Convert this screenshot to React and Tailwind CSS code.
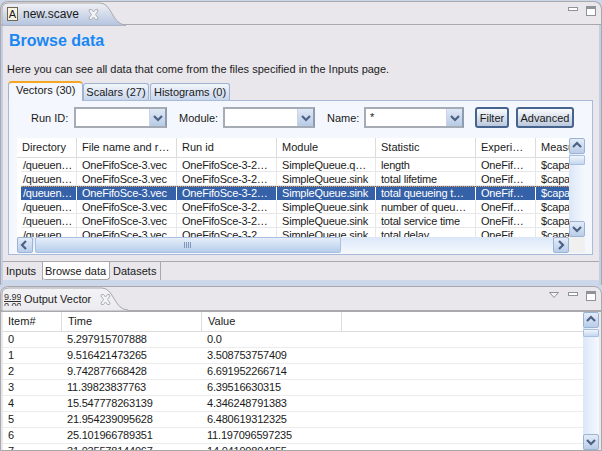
import React from 'react';

const vectorCols = [
  { name: 'Directory', w: 'w-[60px]' },
  { name: 'File name and r…', w: 'w-[100px]' },
  { name: 'Run id', w: 'w-[100px]' },
  { name: 'Module', w: 'w-[99px]' },
  { name: 'Statistic', w: 'w-[100px]' },
  { name: 'Experi…', w: 'w-[60px]' },
  { name: 'Measure', w: 'w-[33px]' },
];

const vectorRows = [
  ['SimpleQueue.q…', 'length'],
  ['SimpleQueue.sink', 'total lifetime'],
  ['SimpleQueue.sink', 'total queueing t…'],
  ['SimpleQueue.sink', 'number of queu…'],
  ['SimpleQueue.sink', 'total service time'],
  ['SimpleQueue.sink', 'total delay'],
];

const outputRows = [
  ['0', '5.297915707888', '0.0'],
  ['1', '9.516421473265', '3.508753757409'],
  ['2', '9.742877668428', '6.691952266714'],
  ['3', '11.39823837763', '6.39516630315'],
  ['4', '15.547778263139', '4.346248791383'],
  ['5', '21.954239095628', '6.480619312325'],
  ['6', '25.101966789351', '11.197096597235'],
  ['7', '31.035578144067', '14.04190804255'],
];

function Chevron({ dir }) {
  const paths = {
    up: 'M2 7 L6 3 L10 7',
    down: 'M2 4 L6 8 L10 4',
    left: 'M7 2 L3 6 L7 10',
    right: 'M4 2 L8 6 L4 10',
  };
  return (
    <svg width="12" height="12" viewBox="0 0 12 12" fill="none">
      <path d={paths[dir]} stroke="#4d6185" strokeWidth="2.2" />
    </svg>
  );
}

function ScrollBtn({ dir, className = '' }) {
  return (
    <div className={`flex items-center justify-center rounded-[2px] border border-[#9db3d3] bg-gradient-to-b from-[#e3ecf9] to-[#b9cde9] shrink-0 ${className}`}>
      <Chevron dir={dir} />
    </div>
  );
}

function Combo({ w, value }) {
  return (
    <div className={`${w} h-[21px] shrink-0 flex border-2 border-[#a5acb5] border-r-[#8f9bb0] bg-white`}>
      <div className="flex-1 pl-[4px] leading-[16px]">{value}</div>
      <div className="w-[16px] flex items-center justify-center bg-gradient-to-b from-[#dfe8f6] to-[#b7cbe6] border-l border-[#c9d4e6]">
        <Chevron dir="down" />
      </div>
    </div>
  );
}

function PushButton({ w, children }) {
  return (
    <div className={`${w} h-[21px] shrink-0 flex items-center justify-center pt-[1px] rounded-[3px] border-2 border-[#47648f] bg-gradient-to-b from-[#f9fafc] to-[#bcc9dd]`}>
      {children}
    </div>
  );
}

function TabShape({ width, from, to }) {
  const w = width;
  return (
    <svg className="absolute left-0 top-0" width={w} height="24" viewBox={`0 0 ${w} 24`}>
      <defs>
        <linearGradient id={`tabfill${w}`} x1="0" y1="0" x2="0" y2="1">
          <stop offset="0" stopColor={from} />
          <stop offset="1" stopColor={to} />
        </linearGradient>
      </defs>
      <path
        d={`M1 24 L1 7 Q1 1 8 1 L${w - 26} 1 C${w - 14} 1 ${w - 14} 23 ${w} 23 L${w} 24 Z`}
        fill={`url(#tabfill${w})`}
        stroke="#a9a9ac"
      />
    </svg>
  );
}

function CloseIcon() {
  return (
    <svg width="11" height="11" viewBox="0 0 11 11">
      <path
        d="M1.5 0.5 L3.5 0.5 L5.5 3 L7.5 0.5 L9.5 0.5 L10 2 L7.5 5.5 L10 9 L9.5 10.5 L7.5 10.5 L5.5 8 L3.5 10.5 L1.5 10.5 L1 9 L3.5 5.5 L1 2 Z"
        fill="#f4f4f6"
        stroke="#a9adb5"
      />
    </svg>
  );
}

function WindowIcons({ menu }) {
  return (
    <div className="flex items-start gap-[8px] pt-[4px] pr-[5px]">
      {menu && (
        <svg width="10" height="6" viewBox="0 0 10 6" className="mt-[1px] mr-[1px]">
          <path d="M0.5 0.5 L9.5 0.5 L5 5.5 Z" fill="#f4f4f6" stroke="#8f9299" />
        </svg>
      )}
      <div className="w-[10px] h-[4px] border border-[#8f9299] bg-white mt-[1px]"></div>
      <div className="w-[10px] h-[10px] border border-[#8f9299] border-t-[3px] bg-white"></div>
    </div>
  );
}

export default function App() {
  return (
    <div className="w-[602px] h-[451px] overflow-hidden bg-[#cdd7ea] flex flex-col text-[11px] leading-[14px] text-[#1a1a1a] font-['Liberation_Sans',Arial,sans-serif]">
      {/* EDITOR PANE */}
      <div className="h-[284px] mt-[1px] shrink-0 flex flex-col rounded-t-[8px] border-x border-t border-[#a9a9ac] bg-[#e9e7ec]">
        <div className="relative h-[23px] shrink-0 flex justify-end border-b border-[#a9a9ac]">
          <TabShape width={125} from="#f1f1f5" to="#b3c3df" />
          <div className="absolute left-[6px] top-[5px] flex items-center">
            <span className="w-[11px] h-[14px] border border-[#6d6650] bg-[#f7f3e3] text-[11px] leading-[12px] text-center">A</span>
            <span className="ml-[5px] text-[12px] leading-[14px]">new.scave</span>
            <span className="ml-[9px]"><CloseIcon /></span>
          </div>
          <WindowIcons />
        </div>

        <div className="flex-1 flex flex-col border-x-[2px] border-[#c3cfe5] min-h-0">
          <div className="pl-[6px] pt-[6px] text-[16px] leading-[20px] font-bold text-[#1a87f5]">Browse data</div>
          <div className="pl-[4px] pt-[11px]">Here you can see all data that come from the files specified in the Inputs page.</div>

          {/* TAB FOLDER */}
          <div className="flex items-end pl-[5px] mt-[4px] h-[20px] shrink-0">
            <div className="w-[75px] h-[20px] rounded-t-[4px] border-t-2 border-x border-t-[#f5a623] border-x-[#9fb3d1] bg-[#f4f7fd] pl-[7px] leading-[15px] z-10 -mb-[1px]">Vectors (30)</div>
            <div className="w-[66px] h-[17px] rounded-t-[3px] border border-b-0 border-[#9fb3d1] bg-gradient-to-b from-[#f2f6fc] to-[#c8d6ec] text-center leading-[17px]">Scalars (27)</div>
            <div className="w-[80px] h-[17px] ml-[1px] rounded-t-[3px] border border-b-0 border-[#9fb3d1] bg-gradient-to-b from-[#f2f6fc] to-[#c8d6ec] text-center leading-[17px]">Histograms (0)</div>
          </div>

          <div className="ml-[5px] w-[585px] h-[155px] shrink-0 flex flex-col border border-[#a8bbd8] bg-[#f4f7fd]">
            <div className="h-[37px] shrink-0 flex items-start pt-[6px]">
              <span className="ml-[22px] w-[43px] leading-[22px]">Run ID:</span>
              <Combo w="w-[93px]" />
              <span className="ml-[12px] w-[44px] leading-[22px]">Module:</span>
              <Combo w="w-[92px]" />
              <span className="ml-[12px] w-[37px] leading-[22px]">Name:</span>
              <Combo w="w-[100px]" value="*" />
              <div className="ml-[11px]"><PushButton w="w-[34px]">Filter</PushButton></div>
              <div className="ml-[7px]"><PushButton w="w-[58px]">Advanced</PushButton></div>
            </div>

            <div className="flex ml-[8px] w-[568px] h-[115px]">
              <div className="w-[552px] flex flex-col">
                <div className="h-[99px] overflow-hidden bg-white">
                  <div className="flex h-[20px] border-b border-[#dcdcdc] bg-white">
                    {vectorCols.map((c) => (
                      <div key={c.name} className={`${c.w} shrink-0 overflow-hidden whitespace-nowrap pl-[5px] leading-[19px] border-r border-[#dcdcdc] last:border-r-0`}>{c.name}</div>
                    ))}
                  </div>
                  {vectorRows.map((r, i) => {
                    const cells = ['/queuen…', 'OneFifoSce-3.vec', 'OneFifoSce-3-2…', r[0], r[1], 'OneFif…', '$capa'];
                    const selected = i === 2;
                    return (
                      <div key={i} className="h-[14px] pl-[4px]">
                        <div className={`flex h-[14px] ${selected ? 'bg-[#3561a8] text-white border-t border-dotted border-[#e8a04a]' : 'border-b border-[#e8e8e8]'}`}>
                          {cells.map((t, j) => (
                            <div
                              key={j}
                              className={`${j === 0 ? 'w-[56px] pl-[2px]' : `${vectorCols[j].w} pl-[5px]`} shrink-0 overflow-hidden whitespace-nowrap tracking-[-0.2px] ${selected ? 'leading-[13px] border-r border-white last:border-r-0' : 'leading-[15px] border-r border-[#e8e8e8] last:border-r-0'}`}
                            >
                              {t}
                            </div>
                          ))}
                        </div>
                      </div>
                    );
                  })}
                </div>
                <div className="h-[16px] flex bg-gradient-to-b from-[#dbe7f8] to-[#f5f9fe]">
                  <ScrollBtn dir="left" className="w-[16px]" />
                  <div className="w-[306px] ml-[2px] flex items-center justify-center rounded-[2px] border border-[#a9c0e0] bg-gradient-to-b from-[#e6eefa] to-[#b6cdea]">
                    <div className="w-[8px] h-[6px] bg-[repeating-linear-gradient(90deg,#8097ba_0,#8097ba_1px,transparent_1px,transparent_2px)]"></div>
                  </div>
                  <div className="flex-1"></div>
                  <ScrollBtn dir="right" className="w-[16px]" />
                </div>
              </div>
              <div className="w-[16px] flex flex-col bg-[#f0f0f0]">
                <div className="h-[99px] flex flex-col bg-gradient-to-r from-[#dbe7f8] to-[#f5f9fe]">
                  <ScrollBtn dir="up" className="h-[16px]" />
                  <div className="h-[10px] mt-[1px] shrink-0 rounded-[1px] border border-[#a9c0e0] bg-gradient-to-b from-[#f0f5fc] to-[#c4d7ef]"></div>
                  <div className="flex-1"></div>
                  <ScrollBtn dir="down" className="h-[16px]" />
                </div>
              </div>
            </div>
          </div>

          {/* PAGE TABS */}
          <div className="h-[7px] shrink-0 border-b border-[#a9a9ac]"></div>
          <div className="flex items-start h-[18px] shrink-0 whitespace-nowrap">
            <div className="w-[40px] h-[18px] pl-[3px] leading-[18px] border-r border-[#a9a9ac]">Inputs</div>
            <div className="w-[67px] h-[18px] pl-[2px] leading-[18px] bg-white border-b border-r border-[#a9a9ac] rounded-b-[3px]">Browse data</div>
            <div className="w-[51px] h-[18px] pl-[3px] leading-[18px] border-r border-[#a9a9ac]">Datasets</div>
          </div>
          <div className="flex-1 bg-[#cdd7ea]"></div>
        </div>
      </div>

      {/* OUTPUT VIEW */}
      <div className="h-[165px] mt-[1px] shrink-0 flex flex-col rounded-t-[8px] border border-[#a9a9ac] bg-[#e9e7ec]">
        <div className="relative h-[25px] shrink-0 flex justify-end border-b-2 border-[#a9a9ac]">
          <TabShape width={127} from="#f3f3f6" to="#ecebef" />
          <div className="absolute left-[3px] top-[5px] flex items-center">
            <div className="w-[17px] h-[13px] overflow-hidden text-[9px] leading-[8px] text-center text-[#333]">
              <div className="border-b border-[#333]">9.99</div>
              <div>0.00</div>
            </div>
            <span className="ml-[3px]">Output Vector</span>
            <span className="ml-[9px]"><CloseIcon /></span>
          </div>
          <WindowIcons menu />
        </div>

        <div className="flex-1 min-h-0 flex ml-[2px] mr-[2px] bg-white">
          <div className="flex-1 overflow-hidden">
            <div className="flex h-[20px] border-b border-[#dcdcdc]">
              <div className="w-[59px] shrink-0 pl-[5px] leading-[19px] border-r border-[#dcdcdc]">Item#</div>
              <div className="w-[140px] shrink-0 pl-[6px] leading-[19px] border-r border-[#dcdcdc]">Time</div>
              <div className="w-[140px] shrink-0 pl-[6px] leading-[19px] border-r border-[#dcdcdc]">Value</div>
            </div>
            {outputRows.map((r) => (
              <div key={r[0]} className="flex h-[16px] border-b border-[#ececec] tracking-[-0.2px]">
                <div className="w-[59px] shrink-0 pl-[5px] leading-[15px]">{r[0]}</div>
                <div className="w-[140px] shrink-0 pl-[5px] leading-[15px]">{r[1]}</div>
                <div className="w-[140px] shrink-0 pl-[5px] leading-[15px]">{r[2]}</div>
              </div>
            ))}
          </div>
          <div className="w-[16px] shrink-0 flex flex-col bg-gradient-to-r from-[#dbe7f8] to-[#f5f9fe]">
            <ScrollBtn dir="up" className="h-[16px]" />
            <div className="h-[8px] mt-[1px] shrink-0 rounded-[1px] border border-[#a9c0e0] bg-gradient-to-b from-[#f0f5fc] to-[#c4d7ef]"></div>
            <div className="flex-1"></div>
            <ScrollBtn dir="down" className="h-[16px]" />
          </div>
        </div>
      </div>
    </div>
  );
}
